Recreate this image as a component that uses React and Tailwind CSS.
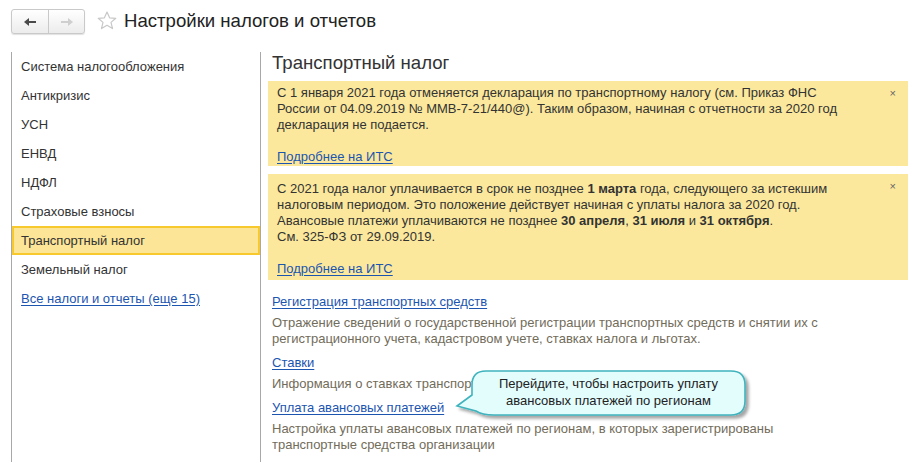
import React from "react";

const menu = [
  "Система налогообложения",
  "Антикризис",
  "УСН",
  "ЕНВД",
  "НДФЛ",
  "Страховые взносы",
  "Транспортный налог",
  "Земельный налог",
];

function NavButtons() {
  return (
    <div className="flex h-[25px] rounded-[3px] border border-[#c9c9c9] bg-gradient-to-b from-white to-[#ececec] shadow-[0_1px_1px_rgba(0,0,0,0.12)]">
      <div className="flex w-[37px] items-center justify-center border-r border-[#c9c9c9]">
        <svg width="14" height="10" viewBox="0 0 14 10">
          <path d="M1 5 L6 1 V4 H13 V6 H6 V9 Z" fill="#4a4a4a" />
        </svg>
      </div>
      <div className="flex w-[35px] items-center justify-center">
        <svg width="14" height="10" viewBox="0 0 14 10">
          <path d="M13 5 L8 1 V4 H1 V6 H8 V9 Z" fill="#cfcfcf" />
        </svg>
      </div>
    </div>
  );
}

function Star() {
  return (
    <svg width="20" height="19" viewBox="0 0 20 19">
      <path
        d="M10 1 L12.6 6.8 L18.8 7.3 L14 11.4 L15.5 17.6 L10 14.3 L4.5 17.6 L6 11.4 L1.2 7.3 L7.4 6.8 Z"
        fill="none"
        stroke="#c8c8c8"
        strokeWidth="1.2"
        strokeLinejoin="round"
      />
    </svg>
  );
}

function Notice({ children, className = "" }) {
  return (
    <div
      className={`relative whitespace-nowrap bg-[#fbe89c] pl-[9px] pr-[40px] text-[13px] leading-[16px] text-[#333] ${className}`}
    >
      <span className="absolute right-[12px] top-[7px] text-[11px] leading-[11px] text-[#666]">×</span>
      {children}
    </div>
  );
}

function Section({ link, children }) {
  return (
    <div className="text-[13px] leading-[16px]">
      <a className="block w-fit text-[#1c55b0] underline underline-offset-2">{link}</a>
      <p className="mt-[5px] whitespace-nowrap text-[#726c5a]">{children}</p>
    </div>
  );
}

function Callout() {
  return (
    <div className="absolute left-[450px] top-[366px] h-[60px] w-[310px]">
      <svg width="310" height="60" viewBox="0 0 310 60" className="absolute left-0 top-0">
        <defs>
          <filter id="sh" x="-10%" y="-20%" width="130%" height="160%">
            <feDropShadow dx="3" dy="3" stdDeviation="1.6" floodColor="#000" floodOpacity="0.35" />
          </filter>
        </defs>
        <path
          d="M36 5 H281 Q295 5 295 19 V35 Q295 49 281 49 H44 Q32 49 26 45 L7 40 L22 29 V19 Q22 5 36 5 Z"
          fill="#e3fdfd"
          stroke="#3fb3bd"
          strokeWidth="1.6"
          filter="url(#sh)"
        />
      </svg>
      <div className="absolute left-[22px] top-[9px] w-[273px] text-center text-[13px] leading-[17px] text-[#222]">
        Перейдите, чтобы настроить уплату
        <br />
        авансовых платежей по регионам
      </div>
    </div>
  );
}

export default function App() {
  return (
    <div
      className="relative h-[462px] w-[923px] overflow-hidden bg-white"
      style={{ fontFamily: '"Liberation Sans", Arial, sans-serif' }}
    >
      <header className="flex h-[52px] items-start pl-[11px] pt-[9px]">
        <NavButtons />
        <div className="ml-[12px] mt-[2px]">
          <Star />
        </div>
        <h1 className="ml-[7px] text-[18.6px] leading-[24px] text-[#222]">Настройки налогов и отчетов</h1>
      </header>

      <div className="flex h-[410px]">
        <aside className="ml-[11px] w-[250px] border-x border-[#a8a8a8]">
          {menu.map((item) => (
            <div
              key={item}
              className={
                item === "Транспортный налог"
                  ? "flex h-[29px] items-center border-2 border-[#f8c92c] bg-[#fce596] pl-[7px] text-[13px] text-[#333]"
                  : "flex h-[29px] items-center pl-[9px] text-[13px] text-[#333]"
              }
            >
              {item}
            </div>
          ))}
          <div className="flex h-[29px] items-center pl-[9px] text-[13px]">
            <a className="text-[#1c55b0] underline underline-offset-2">Все налоги и отчеты (еще 15)</a>
          </div>
        </aside>

        <main className="flex-1 pl-[7px] pr-[15px]">
          <h2 className="ml-[4px] text-[18.6px] leading-[22px] text-[#333]">Транспортный налог</h2>
          <Notice className="mt-[7px] pb-[1px] pt-[4px]">
            С 1 января 2021 года отменяется декларация по транспортному налогу (см. Приказ ФНС
            <br />
            России от 04.09.2019 № ММВ-7-21/440@). Таким образом, начиная с отчетности за 2020 год
            <br />
            декларация не подается.
            <br />
            <br />
            <a className="text-[#1c55b0] underline underline-offset-2">Подробнее на ИТС</a>
          </Notice>
          <Notice className="mt-[8px] pb-[3px] pt-[7px]">
            С 2021 года налог уплачивается в срок не позднее <b>1 марта</b> года, следующего за истекшим
            <br />
            налоговым периодом. Это положение действует начиная с уплаты налога за 2020 год.
            <br />
            Авансовые платежи уплачиваются не позднее <b>30 апреля</b>, <b>31 июля</b> и <b>31 октября</b>.
            <br />
            См. 325-ФЗ от 29.09.2019.
            <br />
            <br />
            <a className="text-[#1c55b0] underline underline-offset-2">Подробнее на ИТС</a>
          </Notice>

          <div className="ml-[4px] mt-[14px] flex flex-col gap-[8px]">
            <Section link="Регистрация транспортных средств">
              Отражение сведений о государственной регистрации транспортных средств и снятии их с
              <br />
              регистрационного учета, кадастровом учете, ставках налога и льготах.
            </Section>
            <Section link="Ставки">Информация о ставках транспортного налога</Section>
            <Section link="Уплата авансовых платежей">
              Настройка уплаты авансовых платежей по регионам, в которых зарегистрированы
              <br />
              транспортные средства организации
            </Section>
          </div>
        </main>
      </div>

      <Callout />
    </div>
  );
}
